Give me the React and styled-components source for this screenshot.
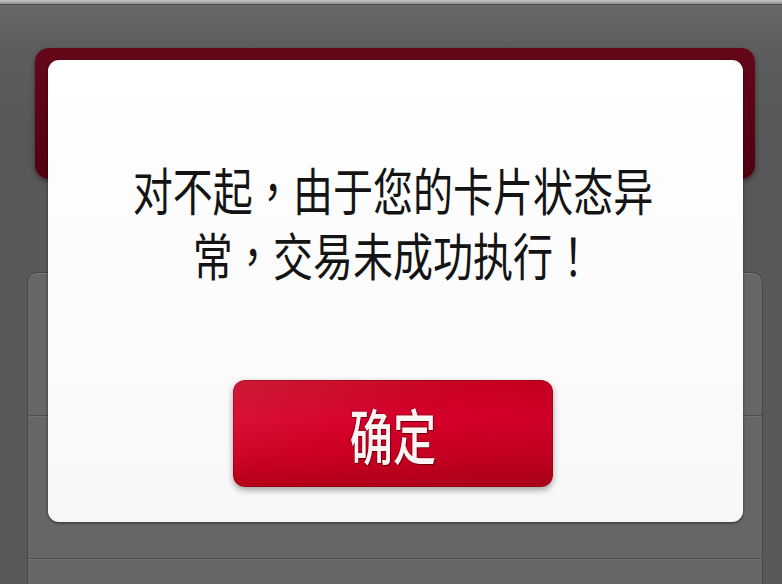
import React from "react";
import styled, { createGlobalStyle } from "styled-components";

const GlobalStyle = createGlobalStyle`
  html, body {
    margin: 0;
    padding: 0;
    background: #58585a;
  }
  body {
    font-family: "Noto Sans CJK SC", "Noto Sans", sans-serif;
  }
`;

const Screen = styled.div`
  position: relative;
  width: 782px;
  height: 584px;
  overflow: hidden;
  background: linear-gradient(180deg, #6a6a6c 0px, #5e5e60 40px, #58585a 120px);
`;

const TopEdge = styled.div`
  height: 4px;
  background: linear-gradient(180deg, #c9c9c9, #8e8e8e);
  border-bottom: 1px solid #4c4c4e;
`;

const Banner = styled.div`
  margin: 43px 27px 0 35px;
  height: 131px;
  border-radius: 14px;
  background: linear-gradient(180deg, #640818, #520010);
  box-shadow: 0 2px 5px rgba(0, 0, 0, 0.45);
`;

const List = styled.div`
  margin: 93px 19px 0 27px;
  border: 1px solid #48484a;
  border-bottom: none;
  border-radius: 10px 10px 0 0;
  background: #666668;
  box-shadow: inset 0 1px 0 rgba(255, 255, 255, 0.12);
`;

const Row = styled.div`
  height: ${(p) => p.$h}px;
  border-bottom: ${(p) => (p.$last ? "none" : "1px solid #505052")};
  box-shadow: ${(p) => (p.$last ? "none" : "0 1px 0 rgba(255,255,255,0.08)")};
`;

const Overlay = styled.div`
  position: absolute;
  inset: 0;
  padding: 60px 39px 0 48px;
`;

const Dialog = styled.div`
  width: 695px;
  height: 462px;
  box-sizing: border-box;
  border-radius: 11px;
  background: linear-gradient(180deg, #ffffff 0%, #fbfbfc 60%, #f7f7f8 100%);
  box-shadow: 0 1px 3px rgba(0, 0, 0, 0.55);
  display: flex;
  flex-direction: column;
  align-items: center;
  padding: 97px 6px 0 0;
`;

const Message = styled.p`
  margin: 0;
  width: 664px;
  font-size: 51px;
  line-height: 65px;
  color: #141414;
  text-align: center;
  transform: scaleX(0.785);
  transform-origin: center;
`;

const Punct = styled.span`
  font-family: "Noto Sans CJK TC", sans-serif;
`;

const ConfirmButton = styled.button`
  margin-top: 93px;
  width: 320px;
  height: 107px;
  border: none;
  border-radius: 12px;
  padding: 0;
  cursor: pointer;
  background:
    linear-gradient(160deg, rgba(255, 255, 255, 0.1) 0%, rgba(255, 255, 255, 0) 45%, rgba(0, 0, 0, 0.08) 100%),
    linear-gradient(180deg, #c5001f 0%, #d6002b 35%, #cb0022 70%, #b60019 100%);
  box-shadow: 0 3px 6px rgba(0, 0, 0, 0.35), inset 0 0 0 1px rgba(120, 0, 10, 0.4);
  display: flex;
  align-items: center;
  justify-content: center;
`;

const ButtonLabel = styled.span`
  display: inline-block;
  font-family: "Noto Sans CJK SC", sans-serif;
  font-size: 60px;
  font-weight: 500;
  line-height: 1;
  color: #fff4f4;
  transform: scaleX(0.72);
  text-shadow: 1px 1px 1px rgba(70, 0, 0, 0.75), -1px -1px 1px rgba(90, 0, 10, 0.45);
`;

export default function App() {
  return (
    <>
      <GlobalStyle />
      <Screen>
        <TopEdge />
        <Banner />
        <List>
          <Row $h={142} />
          <Row $h={142} />
          <Row $h={40} $last />
        </List>
        <Overlay>
          <Dialog>
            <Message>
              对不起<Punct>，</Punct>由于您的卡片状态异常<Punct>，</Punct>交易未成功执行<Punct>！</Punct>
            </Message>
            <ConfirmButton>
              <ButtonLabel>确定</ButtonLabel>
            </ConfirmButton>
          </Dialog>
        </Overlay>
      </Screen>
    </>
  );
}
